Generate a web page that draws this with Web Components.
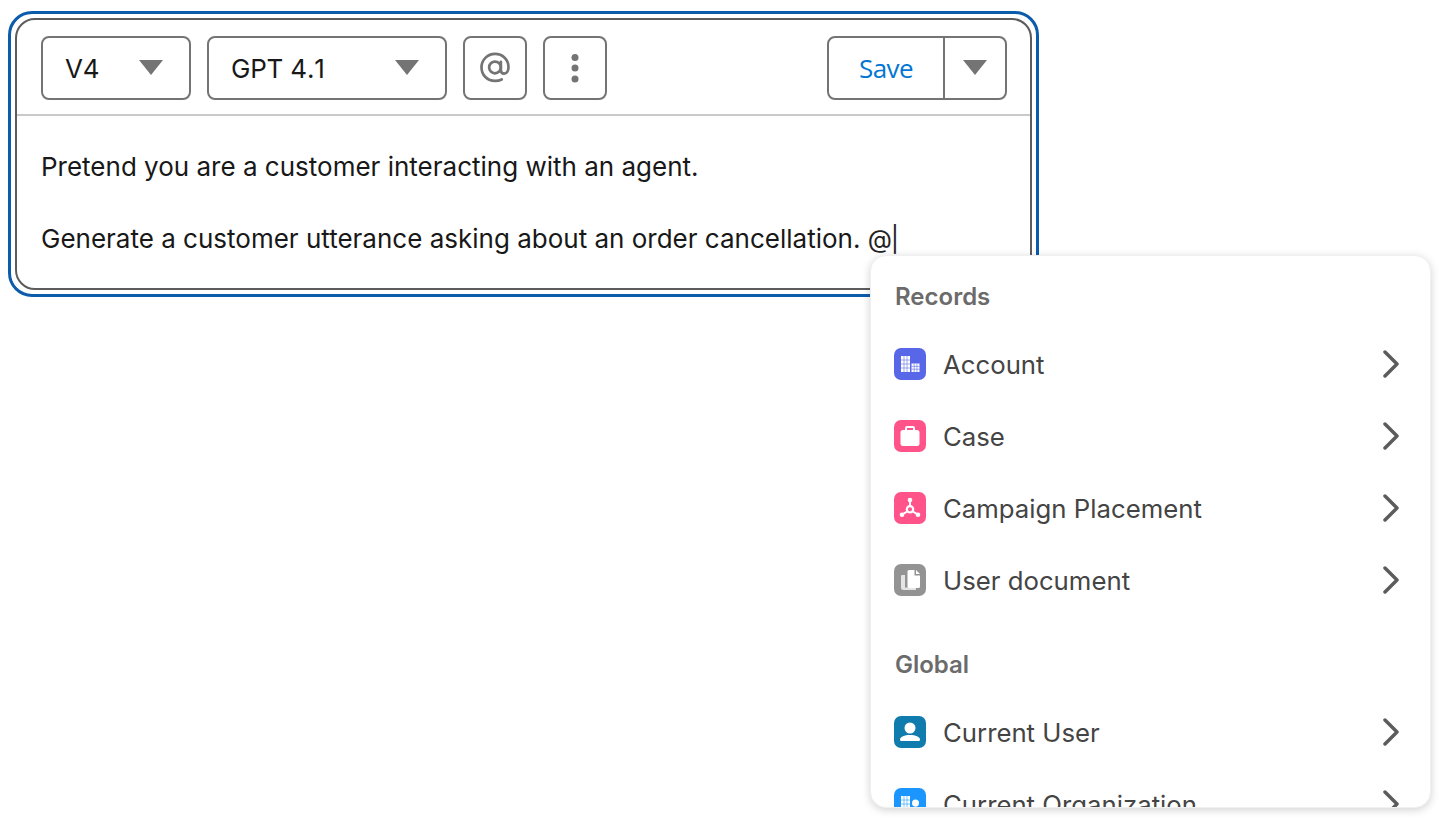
<!DOCTYPE html>
<html lang="en">
<head>
<meta charset="utf-8">
<title>Prompt editor</title>
<style>
  html, body { margin: 0; height: 100%; background: #fff; overflow: hidden; }
  body { font-family: Inter, "Liberation Sans", sans-serif; color: #181818; }
  .tail { letter-spacing: -1px; font-size: 25px; color: #222; }
</style>
</head>
<body>
<prompt-page>
  <prompt-editor>
    <select-box slot="tools" label="V4" width="150"></select-box>
    <select-box slot="tools" label="GPT 4.1" width="240"></select-box>
    <icon-button slot="tools">
      <svg viewBox="0 0 32 32" width="36" height="36" fill="none" stroke="#747474" stroke-width="2.400" stroke-linecap="round">
        <circle cx="16" cy="15.500" r="5.200"/>
        <path d="M21.200 10.500v7.200c0 2.200 1.400 3.300 3 3.300 2.300 0 3.800-2.400 3.800-5.800C28 8.500 22.800 3.500 16 3.500S4 8.800 4 15.500 9.200 27.500 16 27.500c2.400 0 4.200-.4 6-1.300"/>
      </svg>
    </icon-button>
    <icon-button slot="tools">
      <svg viewBox="0 0 32 32" width="32" height="32" fill="#747474">
        <circle cx="16" cy="5.500" r="3.500"/><circle cx="16" cy="16" r="3.500"/><circle cx="16" cy="27" r="3.500"/>
      </svg>
    </icon-button>
    <split-button slot="actions" label="Save"></split-button>
    <p>Pretend you are a customer interacting with an agent.</p>
    <p>Generate a customer utterance asking about an order cancellation. <span class="tail">@|</span></p>
  </prompt-editor>

  <resource-menu>
    <menu-heading>Records</menu-heading>
    <menu-row label="Account">
      <svg slot="icon" viewBox="0 0 32 32" width="32" height="32">
        <rect width="32" height="32" rx="7" fill="#5867e8"/>
        <path fill="#fff" d="M7 8h9v16H7zM17.500 15.500h8V24h-8z"/>
        <path stroke="#5867e8" stroke-width=".8" stroke-opacity=".7" fill="none" d="M10 8v16M13 8v16M7 12h9M7 16h9M7 20h9M20.200 15.500V24M22.900 15.500V24M17.500 18.400h8M17.500 21.200h8"/>
      </svg>
    </menu-row>
    <menu-row label="Case">
      <svg slot="icon" viewBox="0 0 32 32" width="32" height="32">
        <rect width="32" height="32" rx="7" fill="#ff538a"/>
        <path fill="none" stroke="#fff" stroke-width="2" d="M12 10V8a1 1 0 0 1 1-1h6a1 1 0 0 1 1 1v2"/>
        <rect x="6.500" y="10" width="19" height="16" rx="2.500" fill="#fff"/>
      </svg>
    </menu-row>
    <menu-row label="Campaign Placement">
      <svg slot="icon" viewBox="0 0 32 32" width="32" height="32">
        <rect width="32" height="32" rx="7" fill="#ff538a"/>
        <path stroke="#fff" stroke-width="2" d="M16 8v7M14 19l-6 3.700M18 19l6 3.700"/>
        <circle cx="16" cy="17.300" r="3.200" fill="none" stroke="#fff" stroke-width="2.200"/>
        <circle cx="16" cy="8" r="2.300" fill="#fff"/><circle cx="8" cy="22.700" r="2.300" fill="#fff"/><circle cx="24" cy="22.700" r="2.300" fill="#fff"/>
      </svg>
    </menu-row>
    <menu-row label="User document">
      <svg slot="icon" viewBox="0 0 32 32" width="32" height="32">
        <rect width="32" height="32" rx="7" fill="#939393"/>
        <path fill="#fff" d="M8 11h3v12.500h11V26H9.500A2.500 2.500 0 0 1 7 23.500V12a1 1 0 0 1 1-1z" opacity=".75"/>
        <path fill="#fff" d="M15 6h5.500v5.500H26V22.500a1.500 1.500 0 0 1-1.500 1.500H15a1.500 1.500 0 0 1-1.500-1.500V7.500A1.500 1.500 0 0 1 15 6zM22 6l4 4h-4z"/>
      </svg>
    </menu-row>
    <menu-heading class="next">Global</menu-heading>
    <menu-row label="Current User">
      <svg slot="icon" viewBox="0 0 32 32" width="32" height="32">
        <rect width="32" height="32" rx="7" fill="#107cad"/>
        <circle cx="16" cy="12" r="5.500" fill="#fff"/>
        <path fill="#fff" d="M6 23.500c0-2.500 4.500-4.500 10-4.500s10 2 10 4.500c0 1-.8 1.500-1.600 1.500H7.600C6.800 25 6 24.500 6 23.500z"/>
      </svg>
    </menu-row>
    <menu-row label="Current Organization">
      <svg slot="icon" viewBox="0 0 32 32" width="32" height="32">
        <rect width="32" height="32" rx="7" fill="#1b96ff"/>
        <path fill="#fff" d="M7 8h9v16H7z"/>
        <circle cx="21.500" cy="15" r="3.500" fill="#fff"/><path fill="#fff" d="M17.500 24v-3c0-1.500 2-2.500 4-2.500s4 1 4 2.500v3z"/>
        <path stroke="#1b96ff" stroke-width=".8" stroke-opacity=".7" fill="none" d="M10 8v16M13 8v16M7 12h9M7 16h9M7 20h9"/>
      </svg>
    </menu-row>
  </resource-menu>
</prompt-page>

<script>
class PromptPage extends HTMLElement {
  connectedCallback() {
    this.attachShadow({ mode: 'open' });
    this.shadowRoot.innerHTML = `
      <style>
        :host { display: block; position: relative; height: 820px; padding: 11px 0 0 8px; box-sizing: border-box; }
      </style>
      <slot></slot>
    `;
  }
}

class PromptEditor extends HTMLElement {
  connectedCallback() {
    this.attachShadow({ mode: 'open' });
    this.shadowRoot.innerHTML = `
      <style>
        :host {
          display: block;
          width: 1031px;
          height: 286px;
          box-sizing: border-box;
          border: 3px solid #0b5cab;
          border-radius: 24px;
          padding: 4px;
        }
        .inner {
          height: 100%;
          box-sizing: border-box;
          border: 2px solid #5c5c5c;
          border-radius: 20px;
        }
        .toolbar {
          display: flex;
          justify-content: space-between;
          height: 96px;
          box-sizing: border-box;
          padding: 16px 23px 0 24px;
          border-bottom: 2px solid #c9c9c9;
        }
        .group { display: flex; gap: 16px; height: 64px; }
        .body { padding: 33px 24px 0; font-size: 26px; line-height: 36px; color: #181818; }
        ::slotted(p) { margin: 0 0 36px; }
      </style>
      <div class="inner">
        <div class="toolbar">
          <div class="group"><slot name="tools"></slot></div>
          <div class="group"><slot name="actions"></slot></div>
        </div>
        <div class="body"><slot></slot></div>
      </div>
    `;
  }
}

class SelectBox extends HTMLElement {
  connectedCallback() {
    this.attachShadow({ mode: 'open' });
    this.shadowRoot.innerHTML = `
      <style>
        :host {
          display: flex;
          align-items: center;
          justify-content: space-between;
          width: ${this.getAttribute('width')}px;
          height: 64px;
          box-sizing: border-box;
          border: 2px solid #747474;
          border-radius: 8px;
          padding: 0 26px 0 22px;
          font-size: 26px;
          font-kerning: none;
          letter-spacing: -.2px;
          color: #181818;
        }
        .caret { width: 0; height: 0; border: 12.500px solid transparent; border-top: 15px solid #747474; border-bottom: 0; margin-top: -2px; }
      </style>
      <span>${this.getAttribute('label')}</span>
      <span class="caret"></span>
    `;
  }
}

class IconButton extends HTMLElement {
  connectedCallback() {
    this.attachShadow({ mode: 'open' });
    this.shadowRoot.innerHTML = `
      <style>
        :host {
          display: flex;
          align-items: center;
          justify-content: center;
          width: 64px;
          height: 64px;
          box-sizing: border-box;
          border: 2px solid #747474;
          border-radius: 8px;
        }
      </style>
      <slot></slot>
    `;
  }
}

class SplitButton extends HTMLElement {
  connectedCallback() {
    this.attachShadow({ mode: 'open' });
    this.shadowRoot.innerHTML = `
      <style>
        :host {
          display: flex;
          width: 180px;
          height: 64px;
          box-sizing: border-box;
          border: 2px solid #747474;
          border-radius: 8px;
        }
        .main {
          flex: 1;
          display: flex;
          align-items: center;
          justify-content: center;
          border-right: 2px solid #747474;
          color: #0176d3;
          font: 26px "Open Sans", "Liberation Sans", sans-serif;
          letter-spacing: -.6px;
        }
        .more { width: 60px; display: flex; align-items: center; justify-content: center; }
        .caret { width: 0; height: 0; border: 12.500px solid transparent; border-top: 15px solid #747474; border-bottom: 0; margin-top: -2px; }
      </style>
      <span class="main">${this.getAttribute('label')}</span>
      <span class="more"><span class="caret"></span></span>
    `;
  }
}

class ResourceMenu extends HTMLElement {
  connectedCallback() {
    this.attachShadow({ mode: 'open' });
    this.shadowRoot.innerHTML = `
      <style>
        :host {
          position: absolute;
          left: 870px;
          top: 255px;
          width: 561px;
          height: 553px;
          box-sizing: border-box;
          background: #fff;
          border: 1px solid #f0f0f0;
          border-radius: 16px;
          box-shadow: 0 2px 8px rgba(0,0,0,.18);
          overflow: hidden;
          padding: 8px 0 0;
        }
      </style>
      <slot></slot>
    `;
  }
}

class MenuHeading extends HTMLElement {
  connectedCallback() {
    this.attachShadow({ mode: 'open' });
    this.shadowRoot.innerHTML = `
      <style>
        :host {
          display: flex;
          align-items: center;
          height: 64px;
          padding-left: 24px;
          font-size: 24px;
          font-weight: 600;
          color: #6b6b6b;
        }
        :host(.next) { margin-top: 16px; }
      </style>
      <slot></slot>
    `;
  }
}

class MenuRow extends HTMLElement {
  connectedCallback() {
    this.attachShadow({ mode: 'open' });
    this.shadowRoot.innerHTML = `
      <style>
        :host {
          display: flex;
          align-items: center;
          height: 72px;
          padding: 0 30px 0 23px;
          font-size: 25.750px;
          color: #444;
        }
        .icon { width: 32px; height: 32px; margin-right: 17px; display: flex; }
        .label { flex: 1; }
        svg.chev { display: block; }
      </style>
      <span class="icon"><slot name="icon"></slot></span>
      <span class="label">${this.getAttribute('label')}</span>
      <svg class="chev" viewBox="0 0 18 28" width="18" height="28" fill="none" stroke="#5c5c5c" stroke-width="3.500" stroke-linecap="round" stroke-linejoin="round">
        <path d="M3 2l12 12L3 26"/>
      </svg>
    `;
  }
}

customElements.define('prompt-page', PromptPage);
customElements.define('prompt-editor', PromptEditor);
customElements.define('select-box', SelectBox);
customElements.define('icon-button', IconButton);
customElements.define('split-button', SplitButton);
customElements.define('resource-menu', ResourceMenu);
customElements.define('menu-heading', MenuHeading);
customElements.define('menu-row', MenuRow);
</script>
</body>
</html>
